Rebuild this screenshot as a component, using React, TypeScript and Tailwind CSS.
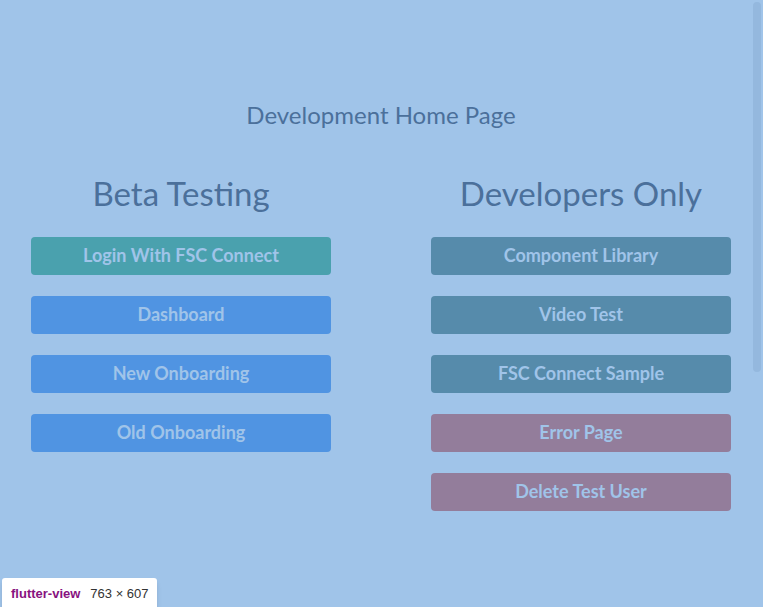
import React from "react";

const beta = [
  { label: "Login With FSC Connect", color: "bg-[#4aa1ae]" },
  { label: "Dashboard", color: "bg-[#5094e2]" },
  { label: "New Onboarding", color: "bg-[#5094e2]" },
  { label: "Old Onboarding", color: "bg-[#5094e2]" },
];

const devs = [
  { label: "Component Library", color: "bg-[#568bab]" },
  { label: "Video Test", color: "bg-[#568bab]" },
  { label: "FSC Connect Sample", color: "bg-[#568bab]" },
  { label: "Error Page", color: "bg-[#937d9b]" },
  { label: "Delete Test User", color: "bg-[#937d9b]" },
];

const Column = ({ title, items }: { title: string; items: { label: string; color: string }[] }) => (
  <div className="w-[300px] flex flex-col items-center">
    <h2 className="text-[33px] leading-[40px] text-[#4b709b] mb-[24px]">{title}</h2>
    <div className="w-full flex flex-col gap-[21px]">
      {items.map((b) => (
        <button
          key={b.label}
          className={`${b.color} h-[38px] w-full rounded-[4px] text-[18px] leading-[22px] pb-[3px] font-bold text-[#a0c4e9] flex items-center justify-center`}
        >
          {b.label}
        </button>
      ))}
    </div>
  </div>
);

export default function App() {
  return (
    <div
      className="relative w-[763px] h-[607px] overflow-hidden bg-[#a0c4e9]"
      style={{ fontFamily: "Lato, 'Open Sans', sans-serif" }}
    >
      <h1 className="pt-[100px] text-center text-[24px] leading-[30px] text-[#4b709b] pr-[1px]">
        Development Home Page
      </h1>
      <div className="flex gap-[100px] pl-[31px] mt-[43px]">
        <Column title="Beta Testing" items={beta} />
        <Column title="Developers Only" items={devs} />
      </div>

      {/* scrollbar thumb */}
      <div className="absolute right-[2px] top-[2px] w-[8px] h-[370px] rounded-full bg-[#94b8de]" />

      {/* inspector tooltip */}
      <div className="absolute left-[2px] top-[578px] w-[155px] h-[34px] bg-white rounded-[3px] shadow-md flex items-start pt-[6px] pl-[9px] text-[13px]" style={{ fontFamily: "'Liberation Sans', Arial, sans-serif" }}>
        <span className="font-bold text-[#881280]">flutter-view</span>
        <span className="ml-[10px] text-[#333]">763 × 607</span>
      </div>
    </div>
  );
}
